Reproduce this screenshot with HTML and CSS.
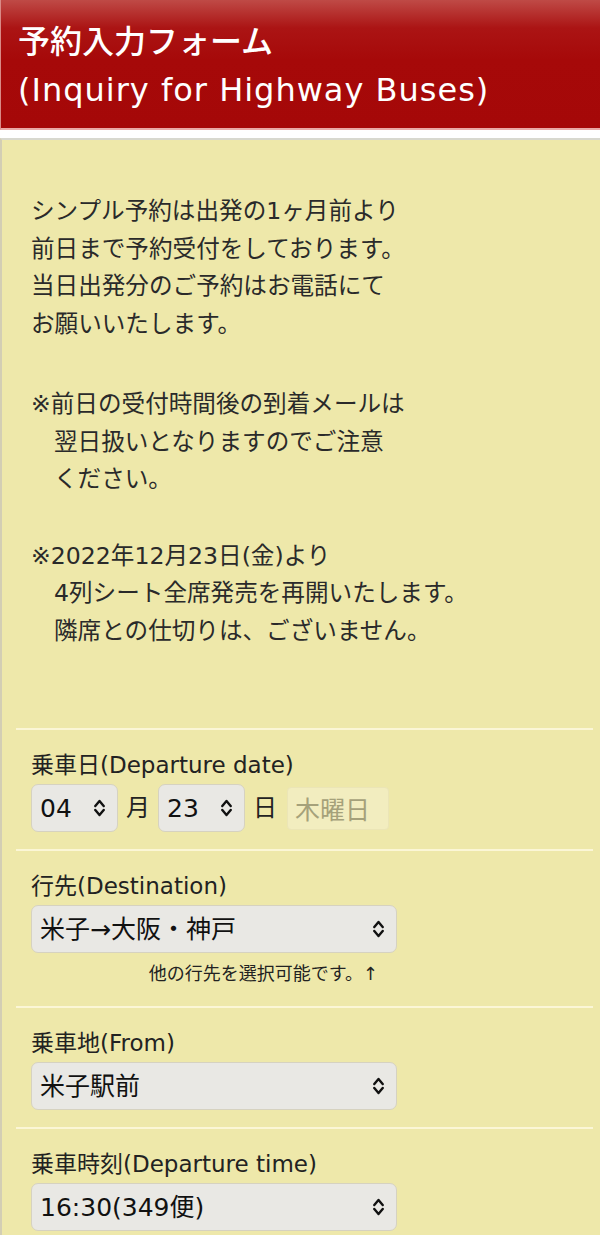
FILE: index.html
```html
<!DOCTYPE html>
<html lang="ja">
<head>
<meta charset="utf-8">
<title>予約入力フォーム</title>
<link rel="stylesheet" href="styles.css">
</head>
<body>
<header class="header">
  <div class="title-ja">予約入力フォーム</div>
  <div class="title-en">(Inquiry for Highway Buses)</div>
</header>
<main class="panel">
  <div class="intro">
    <p class="p1">シンプル予約は出発の1ヶ月前より<br>前日まで予約受付をしております。<br>当日出発分のご予約はお電話にて<br>お願いいたします。</p>
    <p class="note p2">※前日の受付時間後の到着メールは<br>翌日扱いとなりますのでご注意<br>ください。</p>
    <p class="note p3">※2022年12月23日(金)より<br>4列シート全席発売を再開いたします。<br>隣席との仕切りは、ございません。</p>
  </div>

  <section class="field">
    <div class="label">乗車日(Departure date)</div>
    <div class="date-row">
      <div class="sel sel-small">
        <select><option>04</option></select>
        <svg class="chev" viewBox="0 0 11 20"><path d="M1.3 8 L5.5 3 L9.7 8 M1.3 12 L5.5 17 L9.7 12"/></svg>
      </div>
      <span class="unit">月</span>
      <div class="sel sel-small">
        <select><option>23</option></select>
        <svg class="chev" viewBox="0 0 11 20"><path d="M1.3 8 L5.5 3 L9.7 8 M1.3 12 L5.5 17 L9.7 12"/></svg>
      </div>
      <span class="unit">日</span>
      <input class="weekday" type="text" value="木曜日" disabled>
    </div>
  </section>

  <section class="field">
    <div class="label">行先(Destination)</div>
    <div class="sel sel-wide">
      <select><option>米子→大阪・神戸</option></select>
      <svg class="chev" viewBox="0 0 11 20"><path d="M1.3 8 L5.5 3 L9.7 8 M1.3 12 L5.5 17 L9.7 12"/></svg>
    </div>
    <div class="hint">他の行先を選択可能です。↑</div>
  </section>

  <section class="field">
    <div class="label">乗車地(From)</div>
    <div class="sel sel-wide">
      <select><option>米子駅前</option></select>
      <svg class="chev" viewBox="0 0 11 20"><path d="M1.3 8 L5.5 3 L9.7 8 M1.3 12 L5.5 17 L9.7 12"/></svg>
    </div>
  </section>

  <section class="field">
    <div class="label">乗車時刻(Departure time)</div>
    <div class="sel sel-wide">
      <select><option>16:30(349便)</option></select>
      <svg class="chev" viewBox="0 0 11 20"><path d="M1.3 8 L5.5 3 L9.7 8 M1.3 12 L5.5 17 L9.7 12"/></svg>
    </div>
  </section>
</main>
</body>
</html>
```

FILE: styles.css
```css
html, body {
  margin: 0;
  padding: 0;
  background: #ffffff;
}
body {
  font-family: "DejaVu Sans", "Noto Sans CJK JP", sans-serif;
  color: #222;
}
.header {
  background: linear-gradient(to bottom, #bf4a46 0px, #ab1414 28px, #a60909 60px, #a50808 100%);
  color: #ffffff;
  padding: 18px 0 14px 17px;
  font-size: 32px;
  line-height: 48px;
  font-weight: 500;
  border-bottom: 2px solid #e9a9a6;
  border-left: 1px solid #d98a86;
}
.title-en {
  letter-spacing: 1px;
}
.panel {
  margin-top: 8px;
  border-top: 2px solid #d8d8cf;
  border-left: 2px solid #d3ceb4;
  background: #eee8aa;
  padding: 53px 7px 40px 14px;
}
.intro {
  padding-left: 15px;
  font-size: 23.6px;
  line-height: 37.5px;
  color: #2a2a2a;
}
.intro p {
  margin: 0;
}
.intro .p1 { margin-bottom: 43px; }
.intro .p2 { margin-bottom: 39px; }
.intro .p3 { margin-bottom: 78px; }
.note {
  padding-left: 23px;
  text-indent: -23px;
}
.field {
  border-top: 2px solid #fbf6d6;
  padding: 17px 0 17px 15px;
}
.label {
  font-size: 23px;
  line-height: 36px;
  margin-bottom: 1px;
  color: #222;
}
.date-row {
  display: flex;
  align-items: center;
  gap: 8px;
}
.unit {
  font-size: 24px;
  line-height: 48px;
  color: #222;
}
.sel {
  position: relative;
  height: 48px;
}
.sel-small { width: 87px; }
.sel-wide { width: 366px; }
.sel select {
  -webkit-appearance: none;
  appearance: none;
  box-sizing: border-box;
  width: 100%;
  height: 100%;
  margin: 0;
  padding: 0 0 0 8px;
  border: 1px solid #d6d2c0;
  border-radius: 7px;
  background: #e9e8e4;
  color: #111;
  font-family: "DejaVu Sans", "Noto Sans CJK JP", sans-serif;
  font-size: 25px;
}
.chev {
  position: absolute;
  right: 13px;
  top: 14px;
  width: 11px;
  height: 20px;
  fill: none;
  stroke: #111;
  stroke-width: 2.4;
  stroke-linecap: round;
  stroke-linejoin: round;
  pointer-events: none;
}
.weekday {
  box-sizing: border-box;
  width: 102px;
  height: 43px;
  margin: 0 0 0 2px;
  padding: 0 0 0 7px;
  border: 1px solid #ebe5b6;
  border-radius: 4px;
  background: #f2edbf;
  color: #a5a17a;
  -webkit-text-fill-color: #a5a17a;
  font-family: "DejaVu Sans", "Noto Sans CJK JP", sans-serif;
  font-size: 25px;
  opacity: 1;
}
.hint {
  width: 366px;
  box-sizing: border-box;
  padding-right: 19px;
  margin-top: 6px;
  text-align: right;
  font-size: 18px;
  line-height: 30px;
  color: #222;
}
```
